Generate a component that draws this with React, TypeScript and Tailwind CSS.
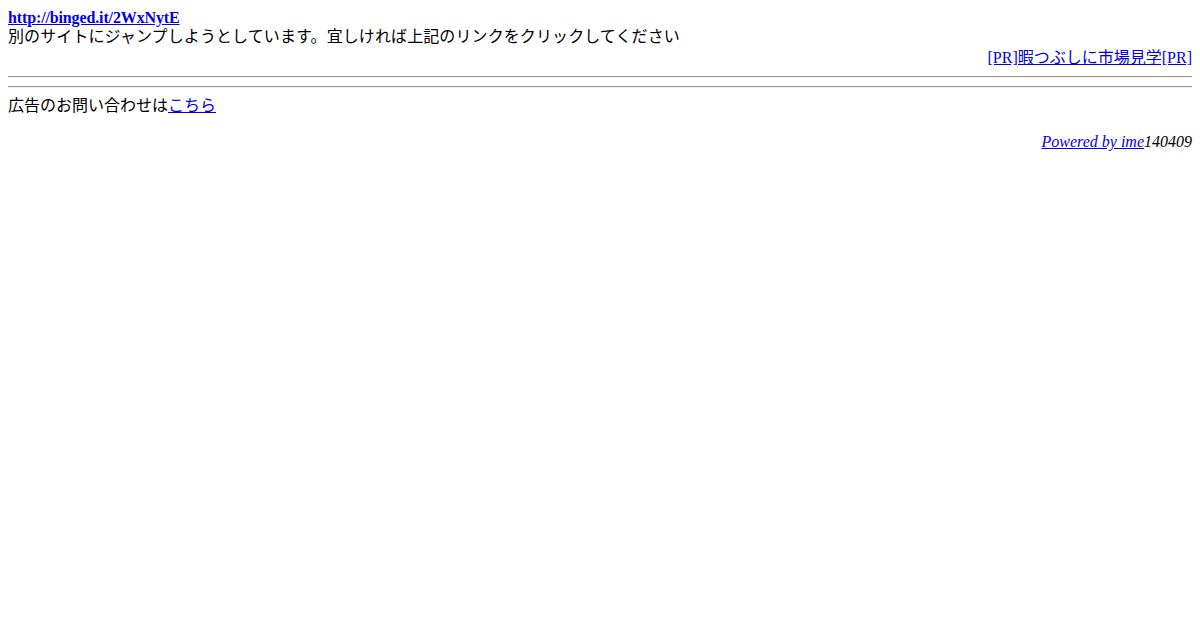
export default function App() {
  return (
    <div
      className="min-h-[630px] bg-white p-2 text-[16px] text-black"
      style={{ fontFamily: '"Liberation Serif", "Noto Sans CJK JP", serif' }}
    >
      <div className="leading-[19px]">
        <a href="#" className="font-bold tracking-[-0.13px] text-[#0000ee] underline">http://binged.it/2WxNytE</a>
      </div>
      <div className="leading-[19px] tracking-[0.1px]">別のサイトにジャンプしようとしています。宜しければ上記のリンクをクリックしてください</div>
      <div className="mt-[2px] text-right leading-[20px]">
        <a href="#" className="text-[#0000ee] underline">[PR]暇つぶしに市場見学[PR]</a>
      </div>
      <div className="mt-[8px] h-[2px] border-t border-t-[#9a9a9a] border-b border-b-[#eeeeee]" />
      <div className="mt-[8px] h-[2px] border-t border-t-[#9a9a9a] border-b border-b-[#eeeeee]" />
      <div className="mt-[8px] leading-[19px]">
        広告のお問い合わせは<a href="#" className="text-[#0000ee] underline">こちら</a>
      </div>
      <div className="mt-[17px] text-right italic leading-[19px]">
        <a href="#" className="text-[#0000ee] underline">Powered by ime</a>140409
      </div>
    </div>
  );
}
